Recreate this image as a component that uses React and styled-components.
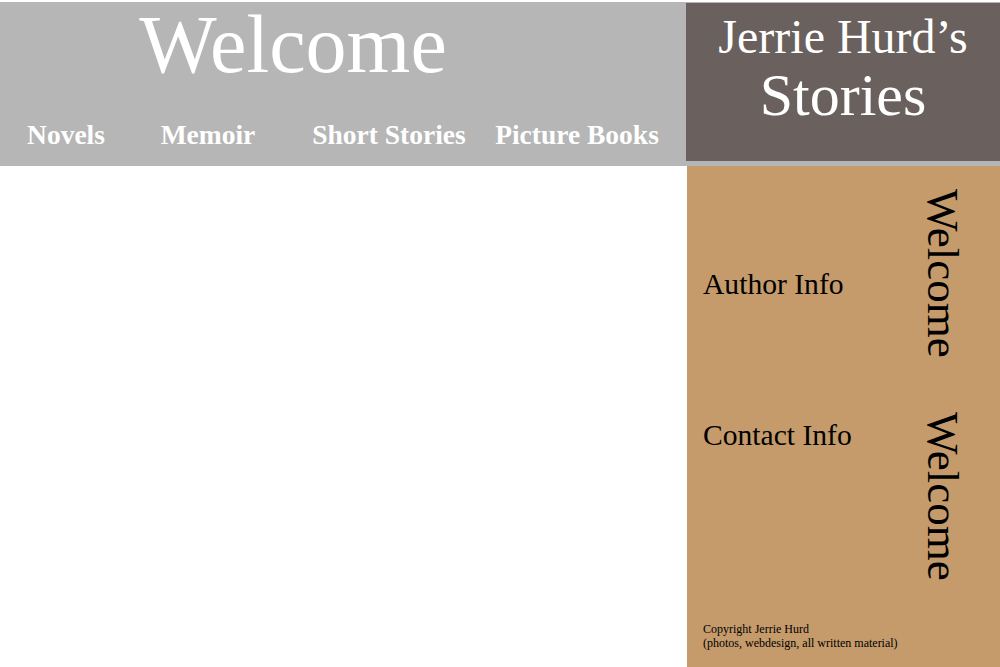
import React from 'react';
import styled, {createGlobalStyle} from 'styled-components';

const GlobalStyle = createGlobalStyle`
  html, body {
    margin: 0;
    padding: 0;
    background: #ffffff;
    font-family: "Liberation Serif", "Times New Roman", serif;
  }
`

const Page = styled.div`
  width: 1000px;
  height: 667px;
  padding-top: 2px;
  box-sizing: border-box;
  display: flex;
  flex-direction: column;
  overflow: hidden;
`
const Header = styled.header`
  display: flex;
  height: 164px;
  background-color: #b6b6b6;
`
const HeaderMain = styled.div`
  width: 686px;
  display: flex;
  flex-direction: column;
`
const Title = styled.h1`
  margin: 2px 0 0;
  padding-right: 100px;
  font-size: 82px;
  line-height: 82px;
  font-weight: normal;
  color: #ffffff;
  text-align: center;
`
const Nav = styled.nav`
  display: grid;
  grid-template-columns: 132px 152px 210px 166px;
  margin-top: 35px;
`
const NavLink = styled.a`
  font-size: 27.5px;
  line-height: 27.5px;
  font-weight: bold;
  color: #ffffff;
  text-align: center;
  text-decoration: none;
  white-space: nowrap;
`
const Brand = styled.div`
  width: 314px;
  margin: 1px 0 5px;
  background-color: #6a605d;
  color: #ffffff;
  text-align: center;
  padding-top: 10px;
  box-sizing: border-box;
`
const BrandLine = styled.div`
  font-size: ${props => props.size}px;
  line-height: ${props => props.size}px;
  margin-bottom: ${props => props.gap || 0}px;
  white-space: nowrap;
`
const Body = styled.div`
  flex: 1;
  display: flex;
`
const Main = styled.main`
  width: 687px;
  background: #ffffff;
`
const Sidebar = styled.aside`
  flex: 1;
  display: flex;
  justify-content: space-between;
  background-color: #c59b6b;
  color: #000000;
`
const InfoColumn = styled.div`
  display: flex;
  flex-direction: column;
  padding: 104px 0 17px 16px;
`
const InfoLink = styled.div`
  font-size: 29.6px;
  line-height: 29.6px;
  margin-bottom: ${props => props.gap || 0}px;
  white-space: nowrap;
`
const Copyright = styled.p`
  margin: auto 0 0;
  font-size: 12px;
  line-height: 14px;
`
const VerticalColumn = styled.div`
  display: flex;
  flex-direction: column;
  gap: 54px;
  padding: 23px 35px 0 0;
`
const VerticalWord = styled.div`
  writing-mode: vertical-rl;
  font-size: 45px;
  line-height: 45px;
`

const App = () => {
  return(
    <Page>
      <GlobalStyle/>
      <Header>
        <HeaderMain>
          <Title>Welcome</Title>
          <Nav>
            <NavLink href="#">Novels</NavLink>
            <NavLink href="#">Memoir</NavLink>
            <NavLink href="#">Short Stories</NavLink>
            <NavLink href="#">Picture Books</NavLink>
          </Nav>
        </HeaderMain>
        <Brand>
          <BrandLine size={48} gap={4}>Jerrie Hurd’s</BrandLine>
          <BrandLine size={60}>Stories</BrandLine>
        </Brand>
      </Header>
      <Body>
        <Main/>
        <Sidebar>
          <InfoColumn>
            <InfoLink gap={121}>Author Info</InfoLink>
            <InfoLink>Contact Info</InfoLink>
            <Copyright>
              Copyright Jerrie Hurd<br/>
              (photos, webdesign, all written material)
            </Copyright>
          </InfoColumn>
          <VerticalColumn>
            <VerticalWord>Welcome</VerticalWord>
            <VerticalWord>Welcome</VerticalWord>
          </VerticalColumn>
        </Sidebar>
      </Body>
    </Page>
  )
}

export default App;
